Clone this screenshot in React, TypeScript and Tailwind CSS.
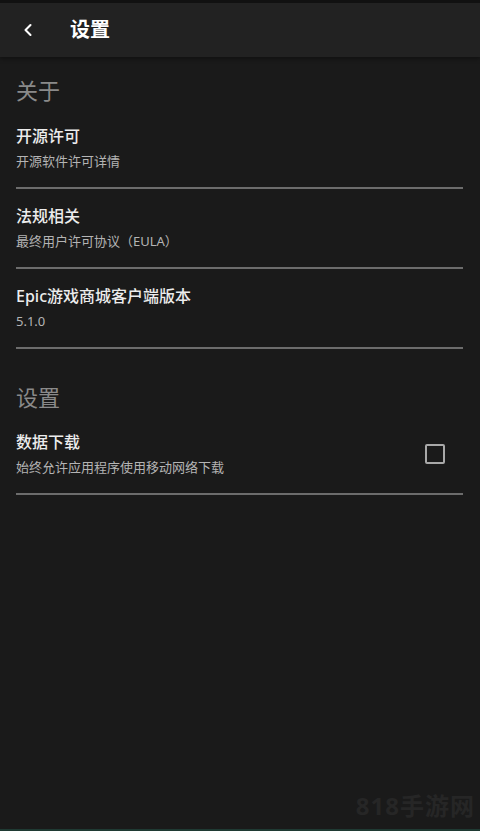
import { ChevronLeft } from "lucide-react";

const font = { fontFamily: '"Noto Sans", "Noto Sans CJK SC", sans-serif' };

function Row({ title, sub, checkbox }: { title: string; sub: string; checkbox?: boolean }) {
  return (
    <div className="ml-4 mr-[17px]">
      <div className="flex items-center justify-between pt-[15px] pb-[16px]">
        <div className="flex flex-col gap-[3px]">
          <span className="text-[16px] leading-[24px] font-medium text-[#ececec]">{title}</span>
          <span className="text-[13px] leading-[20px] text-[#b4b4b4]">{sub}</span>
        </div>
        {checkbox && <div className="mr-[18px] h-5 w-5 rounded-[2px] border-2 border-[#a8a8a8]" />}
      </div>
      <div className="h-[2px] bg-[#6c6c6c]" />
    </div>
  );
}

function SectionHeader({ label }: { label: string }) {
  return (
    <div className="px-4">
      <span className="text-[22px] leading-[30px] text-[#8a8a8a]">{label}</span>
    </div>
  );
}

export default function App() {
  return (
    <div className="relative flex min-h-[831px] w-[480px] flex-col overflow-hidden bg-[#1a1a1a]" style={font}>
      <header className="flex h-[57px] items-center border-t-[3px] border-[#111111] bg-[#222222] shadow-[0_2px_4px_rgba(0,0,0,0.35)]">
        <ChevronLeft className="ml-[18px] h-[20px] w-[20px] text-white" strokeWidth={2.5} />
        <h1 className="ml-[32px] text-[20px] font-bold text-white">设置</h1>
      </header>

      <main className="flex flex-1 flex-col">
        <div className="pt-[18px] pb-[4px]">
          <SectionHeader label="关于" />
        </div>
        <Row title="开源许可" sub="开源软件许可详情" />
        <Row title="法规相关" sub="最终用户许可协议（EULA）" />
        <Row title="Epic游戏商城客户端版本" sub="5.1.0" />
        <div className="pt-[33px] pb-[3px]">
          <SectionHeader label="设置" />
        </div>
        <Row title="数据下载" sub="始终允许应用程序使用移动网络下载" checkbox />
      </main>

      <div className="h-[2px] bg-[#1f3a33]" />

      <span className="pointer-events-none absolute bottom-[7px] right-[5px] text-[24px] font-bold tracking-[1px] text-[#262626]">
        818手游网
      </span>
    </div>
  );
}
